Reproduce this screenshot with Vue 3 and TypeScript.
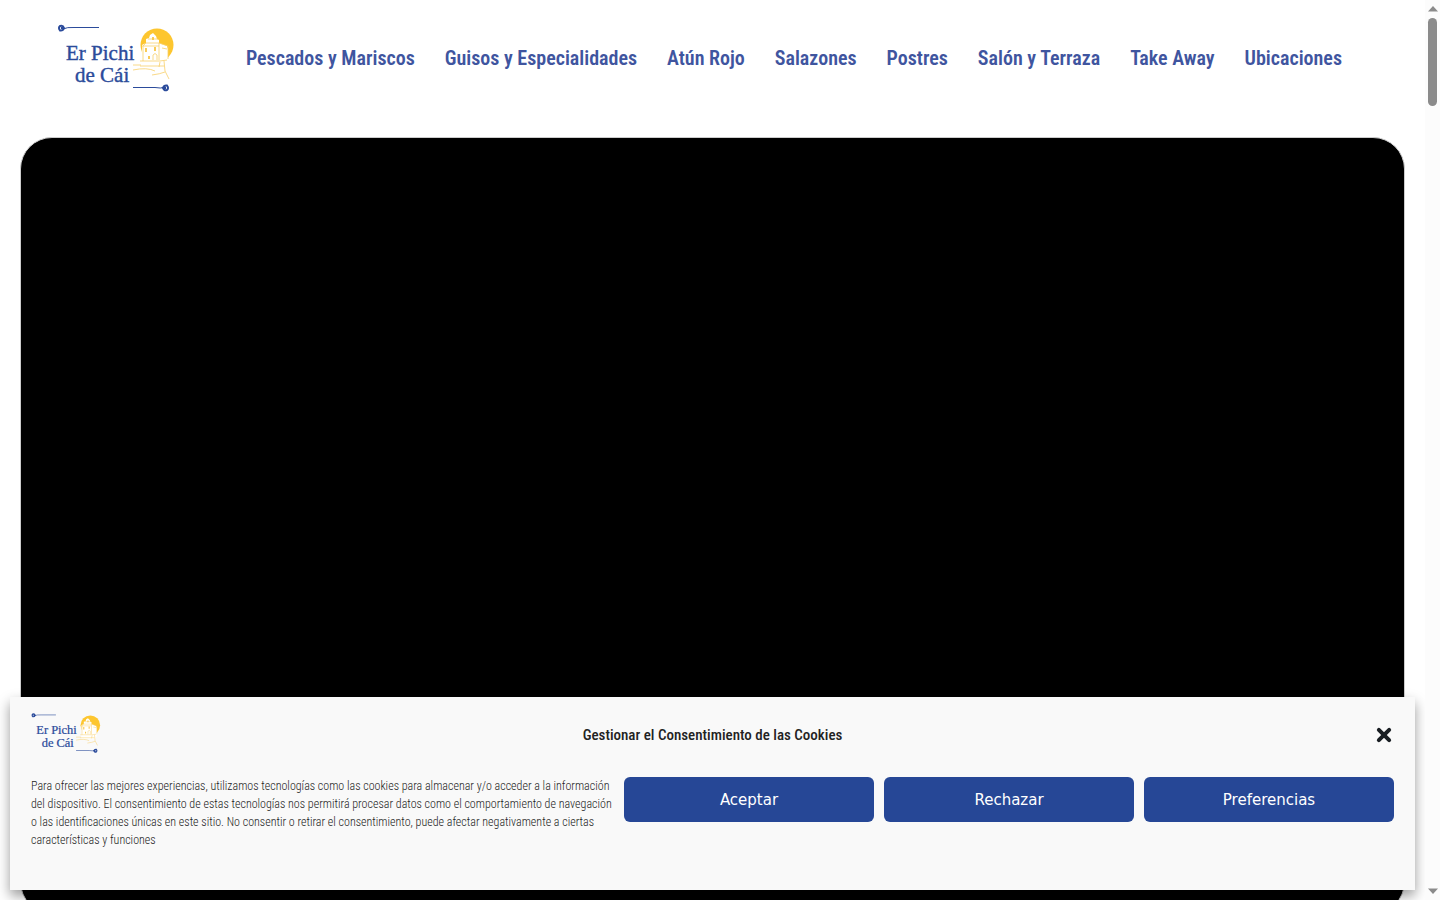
<script setup lang="ts">
import { ref } from 'vue'

const links: string[] = [
  'Pescados y Mariscos',
  'Guisos y Especialidades',
  'Atún Rojo',
  'Salazones',
  'Postres',
  'Salón y Terraza',
  'Take Away',
  'Ubicaciones',
]
const actions: string[] = ['Aceptar', 'Rechazar', 'Preferencias']
const consentOpen = ref(true)
</script>

<template>
  <div class="page">
    <svg class="defs" aria-hidden="true">
      <symbol id="brand-art" viewBox="0 0 118 70">
        <circle cx="100" cy="22" r="16.5" fill="#fdc62f" />
        <path d="M85 45V22l4-2v-4l3-1 1-3 3-2 3 3 1 3 2 1v3l8 3 1 3v14l-3 6z" fill="#fff" />
        <g fill="none" stroke="#f8cf69" stroke-width=".8">
          <path d="M86 38V23l3-3h13v17M102 20l9 3v13M85 23h17M91 16h10M105 25l5 1" />
          <path d="M76 42h8M83 38h20l7-1M83 43h24M76 47q14-3 22 1M95 52q8-1 13-3M107 38l1 10 4 8M103 39l-1 5M96 37v-5q2-3 4 0v5" />
        </g>
        <path d="M89 25v4M98 24v4M96 14v3M92 33v3" stroke="#f8c33c" stroke-width="1.7" />
        <g fill="none" stroke="#2b4b9b">
          <path d="M6 6q4-2 11-1.500h25M76 64.500h22q6 1 9 0" stroke-width="1" />
          <path d="M7 5q-1 3-4 2.500Q1 5 3 3q3-1 4 2H4M106 65q1-3 4-2.500 2 2.500 0 4.500-3 1-4-2h3" stroke-width="2" />
        </g>
      </symbol>
    </svg>

    <div class="viewport">
      <header class="header">
        <a href="#" class="brand" aria-label="Er Pichi de Cái">
          <svg class="logo" viewBox="0 0 118 70">
            <use href="#brand-art" width="118" height="70" />
            <text x="9" y="37">Er Pichi</text>
            <text x="18" y="59">de Cái</text>
          </svg>
        </a>
        <nav class="nav">
          <a v-for="link in links" :key="link" href="#">{{ link }}</a>
        </nav>
      </header>
      <main class="hero"></main>

      <section v-if="consentOpen" class="consent" role="dialog" aria-labelledby="consent-title">
        <div class="consent-head">
          <svg class="logo small" viewBox="0 0 118 70">
            <use href="#brand-art" width="118" height="70" />
            <text x="9" y="37">Er Pichi</text>
            <text x="18" y="59">de Cái</text>
          </svg>
          <h2 id="consent-title">Gestionar el Consentimiento de las Cookies</h2>
          <button class="close" type="button" aria-label="Cerrar" @click="consentOpen = false">
            <svg viewBox="0 0 14 14"><path d="M2.500 2.500l9 9M11.500 2.500l-9 9" /></svg>
          </button>
        </div>
        <div class="consent-body">
          <p>
            Para ofrecer las mejores experiencias, utilizamos tecnologías como las cookies para almacenar y/o
            acceder a la información del dispositivo. El consentimiento de estas tecnologías nos permitirá procesar
            datos como el comportamiento de navegación o las identificaciones únicas en este sitio. No consentir o
            retirar el consentimiento, puede afectar negativamente a ciertas características y funciones
          </p>
          <div class="actions">
            <button v-for="action in actions" :key="action" type="button">{{ action }}</button>
          </div>
        </div>
      </section>
    </div>

    <div class="scrollbar" aria-hidden="true">
      <svg viewBox="0 0 10 6"><path d="M0 5.500L5 0l5 5.500z" /></svg>
      <div class="track"><div class="thumb"></div></div>
      <svg viewBox="0 0 10 6"><path d="M0 .5h10L5 6z" /></svg>
    </div>
  </div>
</template>

<style>
body {
  margin: 0;
  background: #fff;
}
</style>

<style scoped>
.page {
  display: grid;
  grid-template-columns: 1fr 15px;
  height: 100vh;
  overflow: hidden;
  font-family: 'Roboto Condensed', Roboto, sans-serif;
}
.defs {
  position: absolute;
  width: 0;
  height: 0;
}
.viewport {
  position: relative;
  display: flex;
  flex-direction: column;
  min-width: 0;
  overflow: hidden;
}
.header {
  display: flex;
  flex: none;
  align-items: center;
  justify-content: space-between;
  height: 116px;
  padding: 0 83px 0 57px;
}
.brand {
  display: flex;
}
.logo {
  width: 118px;
  height: 70px;
  overflow: visible;
}
.logo.small {
  align-self: start;
  width: 70px;
  height: 42px;
}
.logo text {
  fill: #2b4b9b;
  stroke: #2b4b9b;
  stroke-width: 0.4px;
  font-family: 'Liberation Serif', serif;
  font-size: 21px;
}
.nav {
  display: flex;
  gap: 30px;
}
.nav a {
  color: #3f559f;
  font-size: 20px;
  font-weight: 600;
  line-height: 24px;
  text-decoration: none;
  white-space: nowrap;
}
.hero {
  flex: none;
  height: calc(100vh - 125px);
  margin: 21px 20px 0;
  border: 1px solid #ccc;
  border-radius: 32px;
  background: #000;
}
.consent {
  position: absolute;
  right: 10px;
  bottom: 10px;
  left: 10px;
  box-sizing: border-box;
  min-height: 193px;
  padding: 15px 21px 20px;
  background: #f9f9f9;
  box-shadow: 0 6px 12px rgba(0, 0, 0, 0.4);
}
.consent-head {
  display: grid;
  grid-template-columns: 1fr auto 1fr;
  align-items: center;
  height: 45px;
}
.consent h2 {
  margin: 0;
  color: #222;
  font-size: 15px;
  font-weight: 500;
  line-height: 20px;
}
.close {
  justify-self: end;
  width: 20px;
  height: 20px;
  padding: 2px;
  border: 0;
  background: none;
  cursor: pointer;
}
.close svg {
  display: block;
  width: 16px;
  height: 16px;
}
.close path {
  stroke: #191e23;
  stroke-width: 3.5;
  stroke-linecap: round;
}
.consent-body {
  display: flex;
  gap: 10px;
  align-items: flex-start;
  margin-top: 20px;
}
.consent p {
  flex: 1;
  margin: 0;
  color: #222;
  font-size: 12px;
  font-weight: 300;
  line-height: 18px;
}
.actions {
  display: flex;
  gap: 10px;
}
.actions button {
  width: 250px;
  height: 45px;
  padding: 0 10px;
  border: 0;
  border-radius: 6px;
  background: #264796;
  color: #fff;
  font-family: 'DejaVu Sans', sans-serif;
  font-size: 15px;
  cursor: pointer;
}
.scrollbar {
  display: flex;
  flex-direction: column;
  align-items: center;
  padding: 6px 0;
  background: #fcfcfc;
}
.scrollbar svg {
  width: 10px;
  height: 6px;
  fill: #8b8b8b;
}
.track {
  flex: 1;
  padding: 6px 0;
}
.thumb {
  width: 9px;
  height: 88px;
  border-radius: 5px;
  background: #8b8b8b;
}
</style>
